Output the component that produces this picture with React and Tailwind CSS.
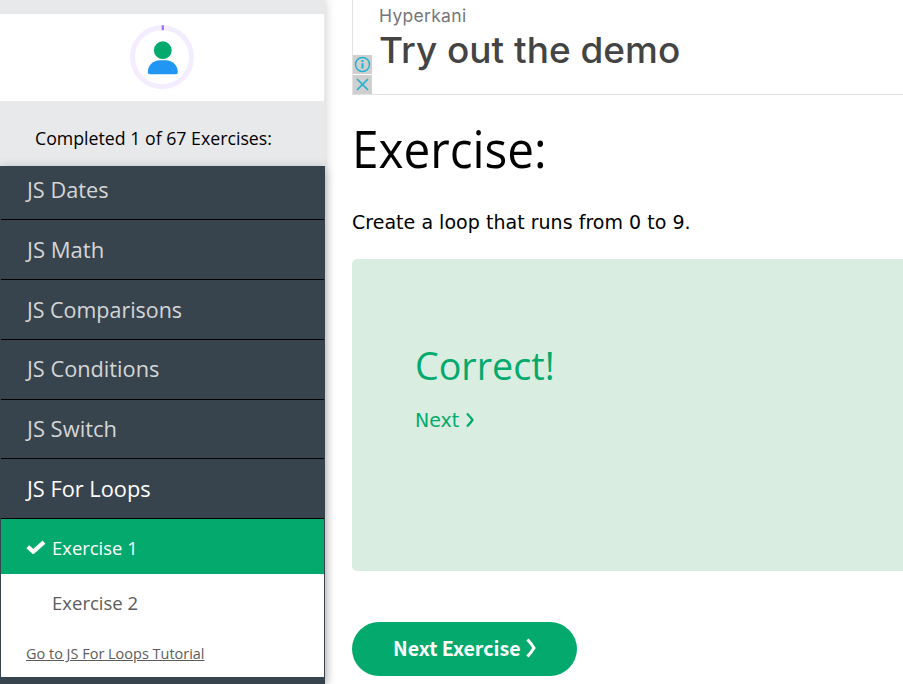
const segoe = "font-['Open_Sans','Noto_Sans',sans-serif]";
const verdana = "font-['DejaVu_Sans',sans-serif]";

const topics = [
  { name: 'JS Dates', row: 'h-[54px] pb-[6px]', fit: 'scale-x-[0.965]' },
  { name: 'JS Math', row: 'h-[60px]', fit: 'scale-x-[0.98]' },
  { name: 'JS Comparisons', row: 'h-[60px]', fit: 'scale-x-[0.953]' },
  { name: 'JS Conditions', row: 'h-[60px] pb-[2px]', fit: 'scale-x-[0.967]' },
  { name: 'JS Switch', row: 'h-[59px] pb-[1px]', fit: 'scale-x-[0.975]' },
  { name: 'JS For Loops', row: 'h-[60px]', fit: 'scale-x-[0.968]', active: true },
];

function Avatar() {
  return (
    <svg width="66" height="66" viewBox="0 0 66 66" fill="none" className="mb-[2px]">
      <circle cx="33" cy="33.2" r="29.5" stroke="#f3edff" strokeWidth="5" />
      <path d="M33.800 1.200v5" stroke="#9b6ff3" strokeWidth="2.2" />
      <circle cx="33.8" cy="26.2" r="8.9" fill="#04aa6d" />
      <path d="M18.800 48.300c0-7 5.200-12 12-12h6c6.800 0 12 5 12 12 0 1.300-.8 2-2 2h-26c-1.200 0-2-.7-2-2z" fill="#2196f3" />
    </svg>
  );
}

function Sidebar() {
  return (
    <aside className={`flex h-[684px] w-[325px] shrink-0 flex-col bg-[#e7e9eb] shadow-[0_0_10px_rgba(0,0,0,0.22)] ${segoe}`}>
      <div className="mt-[14px] mr-px flex h-[87px] items-center justify-center bg-white">
        <Avatar />
      </div>
      <div className="flex h-[65px] items-center pt-[10px] pl-[35px]">
        <span className="origin-left scale-x-[0.933] text-[19px] whitespace-nowrap text-black">Completed 1 of 67 Exercises:</span>
      </div>
      <nav className="flex flex-1 flex-col bg-[#38444d] px-px shadow-[0_2px_10px_rgba(0,0,0,0.25)]">
        {topics.map((t) => (
          <div key={t.name} className={`flex items-center border-b border-black pl-[26px] text-[22.500px] ${t.row} ${t.active ? 'text-white' : 'text-[#d4d6d7]'}`}>
            <span className={`origin-left whitespace-nowrap ${t.fit}`}>{t.name}</span>
          </div>
        ))}
        <div className="flex h-[55px] items-center bg-[#04aa6d] pl-[25px] text-[19px] text-white">
          <svg width="20" height="16" viewBox="0 0 20 16" className="mt-[3px] mr-[6px]" fill="none">
            <path d="M3.300 8.100L7.300 11.700L16.400 3.500" stroke="currentColor" strokeWidth="4.2" strokeLinecap="square" strokeLinejoin="round" />
          </svg>
          <span className="mt-[4px] origin-left scale-x-[0.97] font-medium whitespace-nowrap">Exercise 1</span>
        </div>
        <div className="flex h-[103px] flex-col bg-white text-[#5c5c5c]">
          <div className="flex h-[58px] items-center pl-[51px] text-[19px]">
            <span className="origin-left scale-x-[0.975] whitespace-nowrap">Exercise 2</span>
          </div>
          <div className="flex h-[43px] items-center pl-[25px] text-[15px]">
            <span className="origin-left scale-x-[0.965] whitespace-nowrap underline">Go to JS For Loops Tutorial</span>
          </div>
        </div>
      </nav>
    </aside>
  );
}

function Advert() {
  return (
    <div className="flex h-[95px] border-b border-l border-[#e2e2e2]">
      <div className="mt-[55px] flex w-[19px] flex-col gap-px">
        <div className="flex h-[19px] items-center justify-center bg-[#cfcfcf]">
          <svg width="17" height="17" viewBox="0 0 17 17" fill="none" stroke="#1fb3d1">
            <circle cx="8.5" cy="8.5" r="7" strokeWidth="1.5" />
            <path d="M8.500 7.200v5.300M8.500 4v2" strokeWidth="2" />
          </svg>
        </div>
        <div className="flex h-[19px] items-center justify-center bg-[#cfcfcf]">
          <svg width="13" height="13" viewBox="0 0 13 13" fill="none" stroke="#1fb3d1" strokeWidth="1.7">
            <path d="M1 1l11 11M12 1L1 12" />
          </svg>
        </div>
      </div>
      <div className="ml-[7px] flex flex-col font-['Inter',sans-serif] whitespace-nowrap">
        <div className="mt-[4px] h-[24px] text-[17.500px] leading-[24px] tracking-[0.3px] text-[#75757a]">Hyperkani</div>
        <div className="h-[44px] origin-left scale-x-[1.027] text-[36px] leading-[44px] font-medium text-[#444444]">Try out the demo</div>
      </div>
    </div>
  );
}

export default function App() {
  return (
    <div className="flex h-[684px] w-[903px] overflow-hidden bg-white">
      <Sidebar />
      <main className="ml-[27px] flex min-w-0 flex-1 flex-col">
        <Advert />
        <h1 className={`mt-[17px] h-[72px] origin-left scale-x-[0.917] self-start text-[52px] leading-[72px] whitespace-nowrap text-black ${segoe}`}>Exercise:</h1>
        <p className={`mt-[23px] h-[30px] self-start text-[19px] leading-[30px] tracking-[0.03px] whitespace-nowrap text-black ${verdana}`}>Create a loop that runs from 0 to 9.</p>
        <section className="mt-[22px] flex h-[312px] flex-col rounded-l-[5px] bg-[#d9eee1] pl-[63px] text-[#04aa6d]">
          <h2 className={`mt-[79px] h-[54px] origin-left scale-x-[0.965] self-start text-[39px] leading-[54px] whitespace-nowrap ${segoe}`}>Correct!</h2>
          <div className={`mt-[13px] flex h-[30px] items-center text-[19px] whitespace-nowrap ${verdana}`}>
            <span>Next</span>
            <svg width="11" height="16" viewBox="0 0 11 16" className="ml-[6px]" fill="none">
              <path d="M2 1.500q3.500 3.500 5.500 6.500q-2 3-5.500 6.500" stroke="currentColor" strokeWidth="2.3" />
            </svg>
          </div>
        </section>
        <button className="mt-[51px] flex h-[54px] w-[225px] items-center rounded-full bg-[#04aa6d] pb-[2px] pl-[41px] font-['Noto_Sans_CJK_SC',sans-serif] text-[20px] font-bold whitespace-nowrap text-white">
          <span className="origin-left scale-x-[0.98]">Next Exercise</span>
          <svg width="13" height="20" viewBox="0 0 13 20" className="ml-[2px]" fill="none">
            <path d="M2.500 1.500q4 4.500 6.500 8.500q-2.500 4-6.500 8.500" stroke="currentColor" strokeWidth="3" />
          </svg>
        </button>
      </main>
    </div>
  );
}
